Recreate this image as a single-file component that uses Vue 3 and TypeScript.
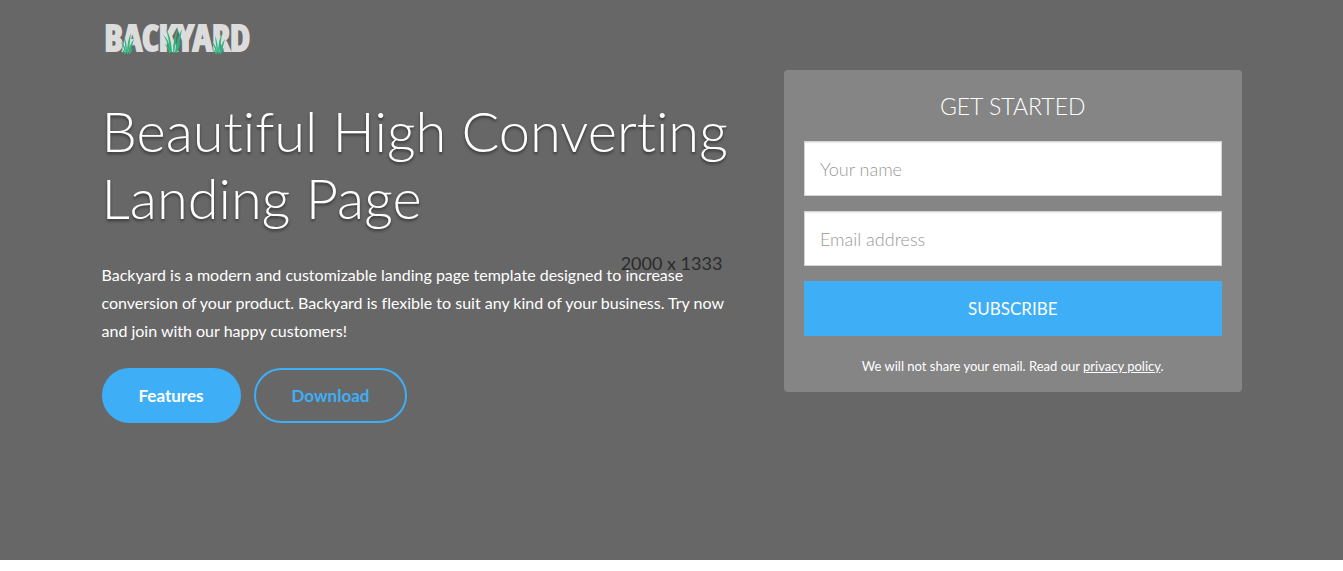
<script setup lang="ts">
import { ref } from 'vue'

const name = ref('')
const email = ref('')
const smallTuft = [
  'M5 21 Q5 13 0 9 Q3 14 4 21Z',
  'M6 20 Q6 9 3 3 Q4 11 5 20Z',
  'M6 21 Q6 8 10 0 Q9 10 7 21Z',
  'M8 21 Q8 12 13 6 Q11 13 9 21Z',
  'M4 21 Q3 17 0 15 Q2 18 3 21Z',
  'M9 20 Q10 16 13 14 Q11 17 10 20Z',
]
const tallTuft = [
  'M8 25 Q6 12 0 8 Q5 14 6 25Z',
  'M9 25 Q8 9 3 2 Q6 12 7 25Z',
  'M10 26 Q10 11 15 0 Q13 12 11 26Z',
  'M12 26 Q13 13 19 2 Q17 14 14 26Z',
  'M8 26 Q5 18 1 17 Q5 20 6 26Z',
  'M12 25 Q14 18 19 14 Q16 19 14 25Z',
]
</script>

<template>
  <header class="hero">
    <div class="backdrop" aria-hidden="true"><span>2000 x 1333</span></div>
    <div class="container">
      <a class="logo" href="#" aria-label="Backyard">
        <span class="wordmark">BACKYARD</span>
        <svg class="grass" viewBox="0 0 144 30" fill="#2bb580" aria-hidden="true">
          <g transform="translate(16 9)"><path v-for="d in smallTuft" :key="d" :d="d" /></g>
          <g transform="translate(58 3)"><path v-for="d in tallTuft" :key="d" :d="d" /></g>
          <g transform="translate(107 9)"><path v-for="d in smallTuft" :key="d" :d="d" /></g>
        </svg>
      </a>
      <div class="columns">
        <section class="intro">
          <h1>Beautiful High Converting Landing Page</h1>
          <p>Backyard is a modern and customizable landing page template designed to increase conversion of your product. Backyard is flexible to suit any kind of your business. Try now and join with our happy customers!</p>
          <div class="actions">
            <a class="btn solid" href="#features">Features</a>
            <a class="btn outline" href="#download">Download</a>
          </div>
        </section>
        <form class="signup" @submit.prevent>
          <h2>GET STARTED</h2>
          <input v-model="name" type="text" placeholder="Your name" aria-label="Your name" />
          <input v-model="email" type="email" placeholder="Email address" aria-label="Email address" />
          <button type="submit">SUBSCRIBE</button>
          <p>We will not share your email. Read our <a href="#privacy">privacy policy</a>.</p>
        </form>
      </div>
    </div>
  </header>
</template>

<style>
body {
  margin: 0;
  background: #fff;
}
</style>

<style scoped>
* {
  box-sizing: border-box;
}
.hero {
  position: relative;
  min-height: 560px;
  background: #676767;
  color: #fff;
  font-family: Lato, sans-serif;
  font-variant-ligatures: none;
}
.backdrop {
  position: absolute;
  inset: 0;
  display: grid;
  place-items: center;
  padding-bottom: 34px;
  color: #2b2b2b;
  font-size: 18px;
  line-height: 24px;
}
.container {
  position: relative;
  max-width: 1170px;
  margin: 0 auto;
  padding: 20px 15px 0;
}
.logo {
  position: relative;
  display: block;
  width: 150px;
  height: 36px;
  padding-left: 3px;
  color: #dcdcdc;
  text-decoration: none;
}
.wordmark {
  display: block;
  font-family: "Open Sans Condensed", "Roboto Condensed", sans-serif;
  font-size: 36px;
  font-weight: 900;
  line-height: 36px;
  -webkit-text-stroke: 2px #dcdcdc;
}
.grass {
  position: absolute;
  left: 3px;
  top: 4px;
  width: 144px;
  height: 30px;
}
.columns {
  display: grid;
  grid-template-columns: minmax(0, 653fr) minmax(0, 458fr);
  align-items: start;
  gap: 30px;
  padding-top: 14px;
}
.intro {
  padding-top: 27px;
}
h1 {
  margin: 0;
  font-size: 56px;
  font-weight: 300;
  line-height: 67px;
  text-shadow: 0 2px 3px rgba(0, 0, 0, 0.5);
}
.intro p {
  max-width: 640px;
  margin: 30px 0 23px;
  font-size: 16px;
  line-height: 28px;
}
.actions {
  display: flex;
  gap: 13px;
}
.btn {
  height: 55px;
  padding: 0 36px;
  border: 2px solid #3eaef6;
  border-radius: 28px;
  color: #3eaef6;
  font-size: 17px;
  font-weight: 700;
  line-height: 52px;
  text-decoration: none;
}
.solid {
  padding: 0 35px;
  background: #3eaef6;
  color: #fff;
}
.signup {
  display: flex;
  flex-direction: column;
  gap: 15px;
  padding: 20px 20px 16px;
  border-radius: 4px;
  background: #858585;
  text-align: center;
}
.signup h2 {
  margin: 0 0 4px;
  font-size: 23px;
  font-weight: 300;
  line-height: 32px;
}
.signup input {
  width: 100%;
  height: 55px;
  padding: 0 15px;
  border: 1px solid #d5d5d5;
  border-radius: 0;
  background: #fff;
  box-shadow: inset 0 1px 1px rgba(0, 0, 0, 0.08);
  color: #555;
  font: 300 18px/24px Lato, sans-serif;
}
.signup input::placeholder {
  color: #999;
  opacity: 1;
}
.signup button {
  height: 55px;
  border: 0;
  background: #3eaef6;
  color: #fff;
  font: 400 17px/24px Lato, sans-serif;
}
.signup p {
  margin: 5px 0 0;
  font-size: 13px;
  line-height: 20px;
}
.signup p a {
  color: #fff;
}
@media (max-width: 900px) {
  .columns {
    grid-template-columns: 1fr;
  }
}
</style>
